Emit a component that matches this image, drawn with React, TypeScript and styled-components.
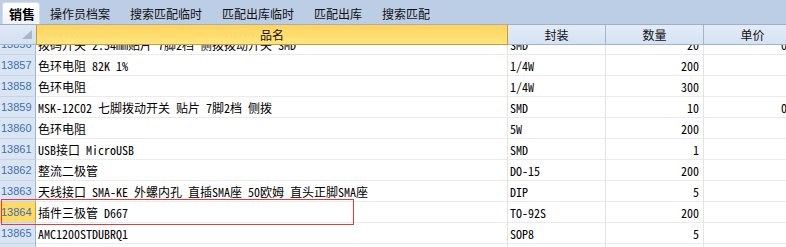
import React from "react";
import styled, { createGlobalStyle, css } from "styled-components";

const GlobalStyle = createGlobalStyle`
  html, body { margin: 0; padding: 0; background: #ffffff; overflow: hidden; }
  * { box-sizing: border-box; }
`;

const CJK = `"Noto Sans Mono CJK SC", "Noto Sans CJK SC", "Liberation Mono", monospace`;

const Frame = styled.div`
  width: 786px;
  height: 247px;
  overflow: hidden;
  display: flex;
  flex-direction: column;
  font-family: ${CJK};
  background: #ffffff;
`;

const TabBar = styled.div`
  height: 25px;
  flex: none;
  display: flex;
  align-items: flex-end;
  padding-left: 2px;
  background: #bccde6;
  border-bottom: 1px solid #9fb0c6;
`;

const Tab = styled.div<{ $active?: boolean }>`
  height: 22px;
  display: flex;
  align-items: center;
  padding: 0 10px;
  font-size: 12px;
  color: #111;
  white-space: nowrap;
  border-radius: 3px 3px 0 0;
  ${(p) =>
    p.$active &&
    css`
      padding: 0 4px 0 6px;
      font-size: 13px;
      font-weight: bold;
      color: #000;
      background: linear-gradient(#ffffff, #eef3fa);
      border: 1px solid #d3deed;
      border-bottom: none;
    `}
`;

const COLS = "36px 472px 98px 98px 98px";

const HeaderRow = styled.div`
  display: grid;
  grid-template-columns: ${COLS};
  height: 20px;
  flex: none;
  position: relative;
  z-index: 1;
  background: #ffffff;
`;

const HeadCell = styled.div<{ $selected?: boolean }>`
  display: flex;
  align-items: center;
  justify-content: center;
  font-size: 12px;
  color: #111;
  background: linear-gradient(#e3ebf6, #d6e3f3);
  border-right: 1px solid #9eb6ce;
  border-bottom: 1px solid #9eb6ce;
  ${(p) =>
    p.$selected &&
    css`
      background: linear-gradient(#ffd35c, #ffe680);
      border-left: 1px solid #d39a2a;
      border-right: 1px solid #d39a2a;
      border-bottom: 1px solid #d39a2a;
    `}
`;

const Corner = styled.div`
  position: relative;
  background: linear-gradient(#dfe8f5, #d4e1f1);
  border-bottom: 1px solid #9eb6ce;
`;

const CornerTriangle = styled.svg`
  position: absolute;
  right: 4px;
  bottom: 5px;
`;

const Body = styled.div`
  position: relative;
  flex: 1;
  overflow: hidden;
`;

const Scroller = styled.div`
  margin-top: -11px;
`;

const Row = styled.div`
  display: grid;
  grid-template-columns: ${COLS};
  height: 21px;
`;

const RowNum = styled.div<{ $selected?: boolean }>`
  display: flex;
  align-items: center;
  padding-left: 1px;
  font-family: "Liberation Sans", Arial, sans-serif;
  font-size: 11px;
  color: #3d6fb0;
  background: #dae5f4;
  border-right: 1px solid #9eb6ce;
  border-bottom: 1px solid #c5d4e8;
  ${(p) =>
    p.$selected &&
    css`
      background: #ffd966;
      border-right: 1px solid #d39a2a;
    `}
`;

const Cell = styled.div<{ $align?: "left" | "right" }>`
  display: flex;
  align-items: center;
  justify-content: ${(p) => (p.$align === "right" ? "flex-end" : "flex-start")};
  padding: ${(p) => (p.$align === "right" ? "0 4px 0 2px" : "0 2px")};
  font-size: 12px;
  color: #000;
  white-space: pre;
  overflow: hidden;
  border-right: 1px solid #e4e4e4;
  border-bottom: 1px solid #ebebeb;
`;

const PriceCell = styled(Cell)`
  padding-right: 2px;
`;

const Highlight = styled.div`
  position: absolute;
  left: 1px;
  top: 154px;
  width: 353px;
  height: 26px;
  border: 1px solid #e23c3c;
  pointer-events: none;
`;

type Item = { no: number; name: string; pkg: string; qty: string; price?: string };

const rows: Item[] = [
  { no: 13856, name: "拨码开关 2.54mm贴片 7脚2档 侧拨拨动开关 SMD", pkg: "SMD", qty: "20", price: "0.1" },
  { no: 13857, name: "色环电阻 82K 1%", pkg: "1/4W", qty: "200" },
  { no: 13858, name: "色环电阻", pkg: "1/4W", qty: "300" },
  { no: 13859, name: "MSK-12C02 七脚拨动开关 贴片 7脚2档 侧拨", pkg: "SMD", qty: "10", price: "0.1" },
  { no: 13860, name: "色环电阻", pkg: "5W", qty: "200" },
  { no: 13861, name: "USB接口 MicroUSB", pkg: "SMD", qty: "1" },
  { no: 13862, name: "整流二极管", pkg: "DO-15", qty: "200" },
  { no: 13863, name: "天线接口 SMA-KE 外螺内孔 直插SMA座 50欧姆 直头正脚SMA座", pkg: "DIP", qty: "5" },
  { no: 13864, name: "插件三极管 D667", pkg: "TO-92S", qty: "200" },
  { no: 13865, name: "AMC1200STDUBRQ1", pkg: "SOP8", qty: "5" },
  { no: 13866, name: "", pkg: "", qty: "" },
];

const tabs = ["销售", "操作员档案", "搜索匹配临时", "匹配出库临时", "匹配出库", "搜索匹配"];

export default function App() {
  return (
    <>
      <GlobalStyle />
      <Frame>
        <TabBar>
          {tabs.map((t, i) => (
            <Tab key={t} $active={i === 0}>
              {t}
            </Tab>
          ))}
        </TabBar>
        <HeaderRow>
          <Corner>
            <CornerTriangle width="10" height="9" viewBox="0 0 10 9">
              <polygon points="10,0 10,9 0,9" fill="#a8b8cc" />
            </CornerTriangle>
          </Corner>
          <HeadCell $selected>品名</HeadCell>
          <HeadCell>封装</HeadCell>
          <HeadCell>数量</HeadCell>
          <HeadCell>单价</HeadCell>
        </HeaderRow>
        <Body>
          <Scroller>
            {rows.map((r) => (
              <Row key={r.no}>
                <RowNum $selected={r.no === 13864}>{r.no}</RowNum>
                <Cell>{r.name}</Cell>
                <Cell>{r.pkg}</Cell>
                <Cell $align="right">{r.qty}</Cell>
                <PriceCell $align="right">{r.price ?? ""}</PriceCell>
              </Row>
            ))}
          </Scroller>
          <Highlight />
        </Body>
      </Frame>
    </>
  );
}
